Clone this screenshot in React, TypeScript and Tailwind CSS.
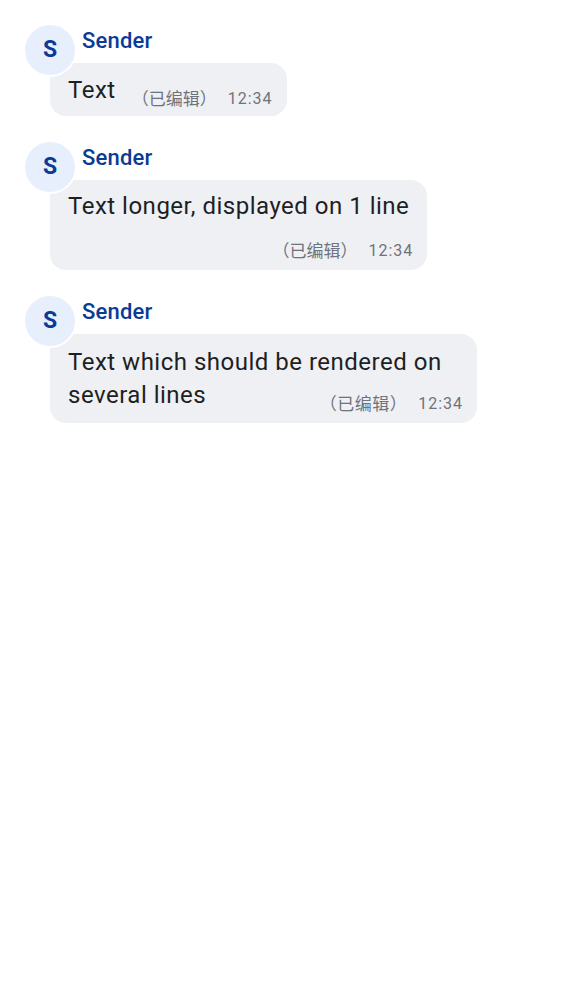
import React from "react";

type Message = {
  id: number;
  sender: string;
  text: string;
  time: string;
  edited: boolean;
  layout: "inline" | "below" | "wrap";
};

const messages: Message[] = [
  { id: 0, sender: "Sender", text: "Text", time: "12:34", edited: true, layout: "inline" },
  {
    id: 1,
    sender: "Sender",
    text: "Text longer, displayed on 1 line",
    time: "12:34",
    edited: true,
    layout: "below",
  },
  {
    id: 2,
    sender: "Sender",
    text: "Text which should be rendered on several lines",
    time: "12:34",
    edited: true,
    layout: "wrap",
  },
];

const Meta = ({ msg, className }: { msg: Message; className?: string }) => (
  <span
    className={
      "flex items-center gap-[11px] whitespace-nowrap leading-[16px] text-[#6f737a] -mr-[4px] " +
      (className ?? "")
    }
  >
    {msg.edited && <span className="text-[17px]">（已编辑）</span>}
    <span className="text-[16px] tracking-[1px]">{msg.time}</span>
  </span>
);

const Bubble = ({ msg }: { msg: Message }) => {
  if (msg.layout === "inline") {
    return (
      <div className="flex w-fit items-end gap-[16px] rounded-[16px] bg-[#eff0f4] px-[18px] pt-[11px] pb-[9px]">
        <p className="text-[24px] leading-[33px] tracking-[0.5px] text-[#1e1f22]">{msg.text}</p>
        <Meta msg={msg} />
      </div>
    );
  }
  if (msg.layout === "below") {
    return (
      <div className="flex w-fit flex-col rounded-[16px] bg-[#eff0f4] px-[18px] pt-[10px] pb-[11px]">
        <p className="text-[24px] leading-[33px] tracking-[0.5px] text-[#1e1f22]">{msg.text}</p>
        <Meta msg={msg} className="mt-[20px] self-end" />
      </div>
    );
  }
  return (
    <div className="w-fit max-w-[427px] rounded-[16px] bg-[#eff0f4] px-[18px] pt-[12px] pb-[11px]">
      <p className="text-[24px] leading-[33px] tracking-[0.5px] text-[#1e1f22]">
        {msg.text}
        <Meta msg={msg} className="float-right ml-[14px] mt-[17px]" />
      </p>
    </div>
  );
};

export default function App() {
  return (
    <div
      className="min-h-screen bg-white px-[25px] pt-[25px]"
      style={{ fontFamily: "Roboto, 'Noto Sans CJK SC', sans-serif" }}
    >
      <div className="flex flex-col gap-[26px]">
        {messages.map((msg) => (
          <div className="relative" key={msg.id}>
            <div className="absolute -left-[2px] -top-[2px] z-10 flex h-[54px] w-[54px] items-center justify-center rounded-full border-2 border-white bg-[#e7effd] text-[23px] font-bold text-[#0b3b94]">
              {msg.sender[0]}
            </div>
            <div className="h-[38px] pl-[57px] pt-[2px] text-[22px] font-medium leading-[28px] tracking-[0.2px] text-[#0b3b94]">
              {msg.sender}
            </div>
            <div className="ml-[25px]">
              <Bubble msg={msg} />
            </div>
          </div>
        ))}
      </div>
    </div>
  );
}
